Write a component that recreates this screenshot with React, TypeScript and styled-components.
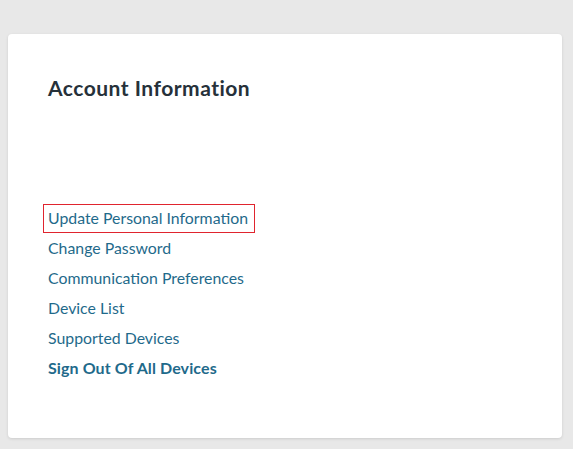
import React from "react";
import styled, { createGlobalStyle } from "styled-components";

const Global = createGlobalStyle`
  html, body { margin: 0; padding: 0; background: #e8e8e8; }
  body { font-family: Lato, "Open Sans", sans-serif; }
`;

const Page = styled.div`
  padding: 34px 11px 11px 8px;
  min-height: 449px;
  box-sizing: border-box;
`;

const Card = styled.section`
  background: #ffffff;
  border-radius: 4px;
  box-shadow: 0 1px 3px rgba(0, 0, 0, 0.12);
  height: 404px;
  box-sizing: border-box;
  padding: 42px 40px 0 40px;
`;

const Title = styled.h2`
  margin: 0;
  font-family: Lato, sans-serif;
  font-weight: 700;
  font-size: 21px;
  line-height: 24px;
  color: #26313a;
  letter-spacing: 0.5px;
`;

const LinkList = styled.ul`
  list-style: none;
  margin: 0;
  padding: 0;
  margin-top: 103px;
  display: flex;
  flex-direction: column;
  align-items: flex-start;
`;

const Item = styled.li`
  height: 30px;
  display: flex;
  align-items: center;
`;

const Link = styled.a<{ $bold?: boolean; $focused?: boolean }>`
  font-family: Lato, sans-serif;
  font-size: ${(p) => (p.$bold ? "16px" : "15.85px")};
  font-weight: ${(p) => (p.$bold ? 700 : 400)};
  letter-spacing: ${(p) => (p.$bold ? "0.1px" : "0")};
  color: #1f6a8b;
  text-decoration: none;
  padding: 3px 6px 4px 4px;
  margin-left: -4px;
  line-height: 20px;
  outline: ${(p) => (p.$focused ? "1px solid #e0242e" : "none")};
`;

const links = [
  "Update Personal Information",
  "Change Password",
  "Communication Preferences",
  "Device List",
  "Supported Devices",
];

export default function App() {
  return (
    <>
      <Global />
      <Page>
        <Card>
          <Title>Account Information</Title>
          <LinkList>
            {links.map((l, i) => (
              <Item key={l}>
                <Link href="#" $focused={i === 0}>
                  {l}
                </Link>
              </Item>
            ))}
            <Item>
              <Link href="#" $bold>
                Sign Out Of All Devices
              </Link>
            </Item>
          </LinkList>
        </Card>
      </Page>
    </>
  );
}
